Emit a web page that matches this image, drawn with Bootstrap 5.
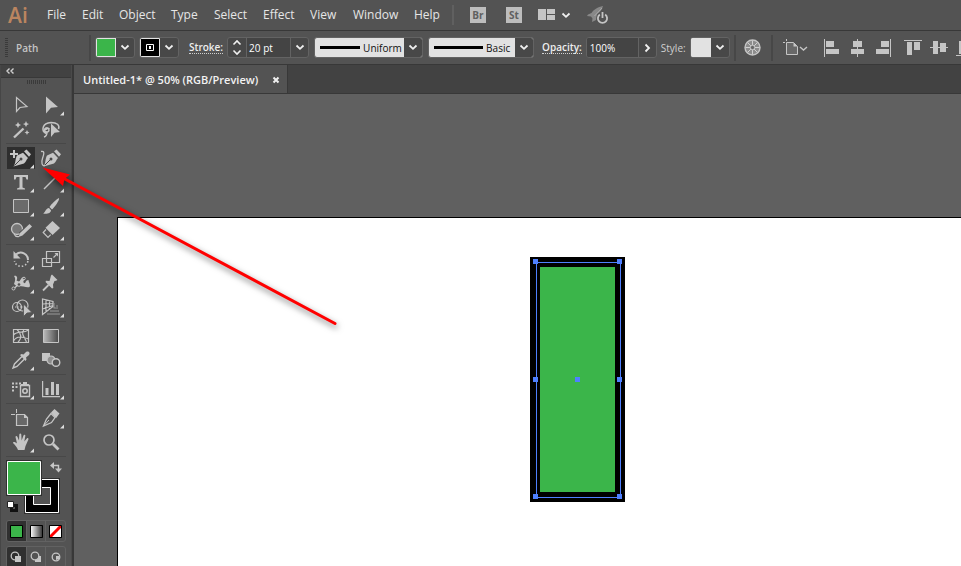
<!DOCTYPE html>
<html lang="en">
<head>
<meta charset="utf-8">
<meta name="viewport" content="width=device-width, initial-scale=1">
<title>Untitled-1</title>
<link href="https://cdn.jsdelivr.net/npm/bootstrap@5.3.0/dist/css/bootstrap.min.css" rel="stylesheet">
<style>
:root{--bar:#535353;--dark:#424242;--edge:#383838;--ink:#c5c5c5;--lite:#e2e2e2;--green:#3bb54a}
body{font-family:"Open Sans","Noto Sans",sans-serif;background:var(--bar);color:#e6e6e6;font-size:12px;line-height:16px}
button,input,select{font:inherit;color:inherit;padding:0;border:0;border-radius:0;background:none}
svg{display:block;flex:none}
.menubar{height:31px;border-bottom:1px solid var(--edge)}
.logo{font-size:21px;line-height:28px;font-weight:600;color:#bb8560;width:39px;padding-left:8px}
.menu-item{color:#e6e6e6;text-decoration:none;white-space:nowrap}
.w-file{width:35px}.w-edit{width:37px}.w-object{width:52px}.w-type{width:43px}.w-select{width:49px}.w-effect{width:47px}.w-view{width:43px}.w-window{width:61px}.w-help{width:38px}
.vsep{width:2px;height:26px;background:#474747;flex:none}
.vsep.pale{height:20px;background:#606060}
.app-tile{width:16px;height:16px;background:#bdbdbd;color:#606060;font-size:10px;font-weight:700;line-height:16px;text-align:center}
.optbar{height:34px;border-bottom:1px solid var(--edge);font-size:10px;overflow:hidden}
.optbar>*{flex:none}
.kind{width:73px;color:#c5c5c5;font-weight:600}
.grip-v{width:3px;height:19px;background:repeating-linear-gradient(#3a3a3a 0 1px,transparent 1px 2px)}
.dock-grip{height:15px;padding-top:2px}
.grip-h{width:19px;height:4px;background:repeating-linear-gradient(90deg,#3a3a3a 0 1px,transparent 1px 2px)}
.field{height:21px;border:1px solid #636363;border-radius:3px;background:#484848;overflow:hidden;position:relative}
.arrow-btn{width:18px;display:flex;align-items:center;justify-content:center;align-self:stretch}
.chip{width:20px;height:19px;border:1px solid var(--lite)}
.chip-green{background:var(--green)}
.chip-pale{background:var(--lite)}
.split{border-left:1px solid #636363}
.field input{background:#444;color:#fff;height:19px;min-width:0}
.num{width:44px;padding-left:2px}
.pct{width:51px;padding-left:3px}
.brush{background:var(--lite)}
.brush select{appearance:none;height:19px;color:#111;background:linear-gradient(90deg,var(--lite) calc(100% - 18px),#484848 0)}
.brush select:focus{outline:0}
.brush .chev{position:absolute;right:4px;top:6px;pointer-events:none}
.sel-uniform{width:62px;padding-left:3px}
.sel-basic{width:50px;padding-left:3px}
.dotted{border-bottom:1px dotted #d0d0d0;line-height:12px;font-weight:600;color:#eee}
.style-label{color:#d0d0d0}
.g4{margin-left:4px}.g5{margin-left:5px}.g8{margin-left:8px}.g10{margin-left:10px}.g12{margin-left:12px}.g16{margin-left:16px}.g20{margin-left:20px}
.dock{width:74px;border-right:2px solid var(--edge);flex:none}
.dock-in{border-right:1px solid #4a4a4a;border-left:1px solid #464646;height:100%}
.dock-head{height:13px;background:var(--dark);border-bottom:1px solid var(--edge);padding-left:5px}
.tools{width:60px;margin-left:5px}
.pair{display:grid;grid-template-columns:28px 28px;column-gap:2px;padding-left:1px;grid-auto-rows:24px}
.tool{display:block;width:28px;height:24px;color:var(--ink)}
.tool.on{background:linear-gradient(#2e2e2e,#2e2e2e) center/28px 22px no-repeat}
.rule{height:1px;background:#484848;margin:2px 0}
.f{fill:var(--ink)}
.s{fill:none;stroke:var(--ink)}
.paint{position:relative;height:60px;margin-top:3px}
.paint button{position:absolute}
.p-stroke{left:18px;top:18px}.p-fill{left:0;top:0}.p-swap{left:43px;top:1px}.p-def{left:0;top:40px}
.modes{border:1px solid #626262;border-radius:3px;height:22px;overflow:hidden}
.modes button{flex:1;display:flex;align-items:center;justify-content:center}
.modes button+button{border-left:1px solid #626262}
.modes .on{background:#303030}
.tabs{height:29px;background:var(--dark);border-bottom:1px solid var(--edge)}
.doc-tab{background:var(--bar);border-right:1px solid var(--edge);padding:1px 5px 0 9px;font-size:11px;font-weight:600;color:#f2f2f2}
.doc-tab button{margin-left:14px;width:10px}
.pasteboard{background:#606060;padding:123px 0 0 43px;min-width:0;overflow:hidden}
.artboard{background:#fff;border:solid #000;border-width:1px 0 0 1px;position:relative}
.shape{position:absolute;left:412px;top:39px}
.pointer{position:absolute;left:30px;top:150px;pointer-events:none;filter:drop-shadow(1px 3px 3px rgba(0,0,0,.55))}
</style>
<script src="https://cdn.jsdelivr.net/npm/bootstrap@5.3.0/dist/js/bootstrap.bundle.min.js"></script>
</head>
<body class="vh-100 overflow-hidden d-flex flex-column position-relative">
<svg width="0" height="0" class="position-absolute" aria-hidden="true">
  <symbol id="chev" viewBox="0 0 10 7"><path d="M1.500 1.500 5 4.800 8.500 1.500" fill="none" stroke="#f0f0f0" stroke-width="1.800"/></symbol>
  <symbol id="more" viewBox="-14 -12 28 24"><path d="M13 6.500V10.500H9z" fill="#ddd"/></symbol>
  <symbol id="nib" viewBox="-14 -12 28 24"><path d="M-7.500 8.500C-5 5-6 1-4-2.500L2-5.200 7 0C5 2 5 4 3 5.500Z" fill="#c5c5c5"/><path d="M3-6.800 5.500-8.500 10-3.800 8-1.300Z" fill="#c5c5c5"/><path d="M-6.500 7.500-.800 1.800" stroke="#484848" stroke-width="1"/><circle cx="0" cy="1" r="1.500" fill="#484848"/></symbol>
</svg>

<header>
  <nav class="menubar d-flex align-items-center" aria-label="Main menu">
    <span class="logo">Ai</span>
    <span class="d-flex ps-2">
      <a class="menu-item w-file" href="#">File</a><a class="menu-item w-edit" href="#">Edit</a><a class="menu-item w-object" href="#">Object</a><a class="menu-item w-type" href="#">Type</a><a class="menu-item w-select" href="#">Select</a><a class="menu-item w-effect" href="#">Effect</a><a class="menu-item w-view" href="#">View</a><a class="menu-item w-window" href="#">Window</a><a class="menu-item w-help" href="#">Help</a>
    </span>
    <span class="vsep pale"></span>
    <button class="app-tile ms-3">Br</button>
    <button class="app-tile g20">St</button>
    <button class="d-flex align-items-center ms-3" aria-label="Arrange documents"><svg width="18" height="12"><path class="f" d="M0 0h8v11H0zM9 0h8v5H9zM9 6h8v5H9z"/></svg><svg class="g5" width="10" height="7"><use href="#chev"/></svg></button>
    <button class="ms-3" aria-label="GPU performance"><svg width="22" height="18" viewBox="0 0 22 18"><path d="M16 0C11 1 6 4 4.500 7L1 8.500 0 10l4 .5 1.500 2L5 16l4-2 1-6c3-2 5-4 6-8Z" fill="#888"/><path d="M7.500 10 15 2" stroke="#aaa"/><circle cx="15.500" cy="12" r="6" fill="#535353"/><path d="M12.800 8.600a4.600 4.600 0 1 0 5.400 0M15.500 6v6" fill="none" stroke="#c5c5c5" stroke-width="1.800"/></svg></button>
  </nav>

  <div class="optbar d-flex align-items-center" role="toolbar" aria-label="Control">
    <span class="grip-v g5"></span>
    <span class="kind g8">Path</span>
    <span class="vsep"></span>
    <div class="field d-flex g4"><button class="chip chip-green" aria-label="Fill"></button><button class="arrow-btn" aria-label="Fill options"><svg width="10" height="7"><use href="#chev"/></svg></button></div>
    <div class="field d-flex g4"><button aria-label="Stroke colour"><svg width="20" height="19"><path fill="#000" stroke="#e2e2e2" d="M.5.5h19v18H.500z"/><path fill="none" stroke="#fff" d="M6.500 6.500h7v6h-7z"/><path fill="#fff" d="M9 8h2v3H9z"/></svg></button><button class="arrow-btn" aria-label="Stroke colour options"><svg width="10" height="7"><use href="#chev"/></svg></button></div>
    <label class="dotted g10" for="weight">Stroke:</label>
    <div class="field d-flex g4">
      <button class="arrow-btn" aria-label="Step weight"><svg width="10" height="17"><path d="M1.500 5.500 5 2l3.500 3.500M1.500 11.500 5 15l3.500-3.500" fill="none" stroke="#f0f0f0" stroke-width="1.600"/></svg></button>
      <input class="num split" id="weight" value="20 pt"><button class="arrow-btn split" aria-label="Weight presets"><svg width="10" height="7"><use href="#chev"/></svg></button>
    </div>
    <div class="field brush d-flex align-items-center g5"><svg class="g5" width="40" height="3"><path d="M0 0h40v3H0z"/></svg><select class="sel-uniform" aria-label="Width profile"><option>Uniform</option></select><svg class="chev" width="10" height="7"><use href="#chev"/></svg></div>
    <div class="field brush d-flex align-items-center g5"><svg class="g5" width="49" height="3"><path d="M0 0h49v3H0z"/></svg><select class="sel-basic" aria-label="Brush"><option>Basic</option></select><svg class="chev" width="10" height="7"><use href="#chev"/></svg></div>
    <label class="dotted g8" for="opacity">Opacity:</label>
    <div class="field d-flex g4"><input class="pct" id="opacity" value="100%"><button class="arrow-btn split" aria-label="Opacity slider"><svg width="7" height="10"><path d="M1.500 1.500 5 5 1.500 8.500" fill="none" stroke="#f0f0f0" stroke-width="1.800"/></svg></button></div>
    <span class="g4 style-label">Style:</span>
    <div class="field d-flex g4"><button class="chip chip-pale" aria-label="Graphic style"></button><button class="arrow-btn" aria-label="Style options"><svg width="10" height="7"><use href="#chev"/></svg></button></div>
    <span class="vsep g4"></span>
    <button class="g8" aria-label="Recolor artwork"><svg width="17" height="17" viewBox="-8.500 -8.500 17 17"><circle r="7.500" fill="#8d8d8d" stroke="#c5c5c5" stroke-width="1.400"/><path d="M0-7V7M-7 0H7M-5-5 5 5M5-5-5 5" stroke="#d0d0d0" stroke-width="1"/><circle r="2.200" fill="#666" stroke="#c5c5c5"/></svg></button>
    <span class="vsep g10"></span>
    <button class="g10" aria-label="Transform"><svg width="25" height="17" viewBox="0 0 25 17"><path d="M3.500 3.500h7l4 4v8h-11z" fill="#686868" stroke="#c5c5c5"/><path d="M10.500 3.500v4h4z" fill="#c5c5c5"/><path class="s" d="M0 3.500h2M3.500 0v2"/><path class="s" d="m17 8 3.500 3L24 8" stroke-width="1.400"/></svg></button>
    <button class="g16" aria-label="Align left"><svg width="15" height="18"><path class="f" d="M0 0h1v18H0zM2 2h8v6H2zM2 10h13v5H2z"/></svg></button>
    <button class="g12" aria-label="Align horizontal centre"><svg width="13" height="18"><path class="f" d="M6 0h1v18H6zM2 2h9v6H2zM0 10h13v5H0z"/></svg></button>
    <button class="g12" aria-label="Align right"><svg width="16" height="18"><path class="f" d="M14 0h1v18h-1zM5 2h8v6H5zM0 10h13v5H0z"/></svg></button>
    <button class="g12" aria-label="Align top"><svg width="18" height="18"><path class="f" d="M0 1h18v1H0zM3 3h5v13H3zM10 3h6v8h-6z"/></svg></button>
    <button class="g8" aria-label="Align vertical centre"><svg width="18" height="18"><path class="f" d="M0 8h18v1H0zM3 2h5v13H3zM10 4h6v9h-6z"/></svg></button>
    <button class="g8" aria-label="Align bottom"><svg width="18" height="18"><path class="f" d="M0 16h18v1H0zM3 2h5v13H3z"/></svg></button>
  </div>
</header>

<main class="d-flex flex-grow-1 overflow-hidden">
  <aside class="dock"><div class="dock-in">
    <div class="dock-head d-flex align-items-center"><button aria-label="Collapse panel"><svg width="8" height="6"><path d="M3.500.500 1 3l2.500 2.500M7.500.500 5 3l2.500 2.500" fill="none" stroke="#d0d0d0" stroke-width="1.400"/></svg></button></div>
    <div class="d-flex justify-content-center dock-grip"><span class="grip-h"></span></div>
    <div class="tools">
      <div class="pair">
        <button class="tool" aria-label="Selection"><svg viewBox="-14 -12 28 24"><path class="s" stroke-width="1.200" d="M-4.500-7.500V6.500L-1 2.500 6 1.500Z"/></svg></button>
        <button class="tool" aria-label="Direct selection"><svg viewBox="-14 -12 28 24"><path class="f" d="M-5-8.500V8.500L0 2.800 7 2Z"/><use href="#more" x="-14" y="-12" width="28" height="24"/></svg></button>
        <button class="tool" aria-label="Magic wand"><svg viewBox="-14 -12 28 24"><path class="s" stroke-width="2.400" d="M-7 8.500 2.500-.500"/><path class="f" d="m-3-7 1 2 2 1-2 1-1 2-1-2-2-1 2-1zM5-8l1 2.300L8-5 6-4 5-2 4-4 2-5l2-.7zM6 1l.8 1.700L8.500 3.500 6.800 4.300 6 6l-.8-1.700L3.500 3.500l1.700-.8z"/></svg></button>
        <button class="tool" aria-label="Lasso"><svg viewBox="-14 -12 28 24"><path class="s" stroke-width="1.500" d="M-5 4.500C-10 2-9-6 0-6.500 6-6.500 9-4 7.500 0M-1.500 0c-3-3-6 0-4.500 2s4 1 4-1-3-2-3 0M-4 3c0 3-1 4.500-3 5"/><path class="f" d="M0-5.500V8l3.500-4.200L9 3Z"/></svg></button>
      </div>
      <div class="rule"></div>
      <div class="pair">
        <button class="tool on" aria-label="Add anchor point"><svg viewBox="-14 -12 28 24"><use href="#nib" x="-14" y="-12" width="28" height="24"/><path stroke="#2e2e2e" stroke-width="4" d="M-7-7v7"/><path class="s" stroke-width="2" d="M-11-4h8M-7-8v8"/><use href="#more" x="-14" y="-12" width="28" height="24"/></svg></button>
        <button class="tool" aria-label="Curvature"><svg viewBox="-14 -12 28 24"><use href="#nib" x="-14" y="-12" width="28" height="24"/><path class="s" stroke-width="1.300" d="M-10-6.500c4-1 3 3 1.500 7S-9 8.500-6 7.500"/></svg></button>
        <button class="tool" aria-label="Type"><svg viewBox="-14 -12 28 24"><path class="f" d="M-7-7H7v4.500H5.500L4.500-5H1.500V5.500L4 6.500v1H-4v-1l2.500-1V-5H-4.500l-1 2.500H-7z"/><use href="#more" x="-14" y="-12" width="28" height="24"/></svg></button>
        <button class="tool" aria-label="Line segment"><svg viewBox="-14 -12 28 24"><path class="s" stroke-width="1.400" d="M-7 7 6-6"/><use href="#more" x="-14" y="-12" width="28" height="24"/></svg></button>
        <button class="tool" aria-label="Rectangle"><svg viewBox="-14 -12 28 24"><path d="M-7.500-6.500h15v13h-15z" fill="#6b6b6b" stroke="#c5c5c5"/><use href="#more" x="-14" y="-12" width="28" height="24"/></svg></button>
        <button class="tool" aria-label="Paintbrush"><svg viewBox="-14 -12 28 24"><path class="f" d="M8-8C9-6 3 2 1 3.500L-1.500 1C0-1.500 6-7.500 8-8ZM-2 2 0 4.200C0 7-4 8.500-8 7.500-6 7-5.500 2.500-2 2Z"/><use href="#more" x="-14" y="-12" width="28" height="24"/></svg></button>
        <button class="tool" aria-label="Shaper"><svg viewBox="-14 -12 28 24"><circle cx="-4" cy="-1" r="5.500" fill="#777" stroke="#c5c5c5" stroke-width="1.300"/><path d="M9-4.500-.500 4.500" stroke="#535353" stroke-width="5"/><path class="f" d="M8.500-6 11-3.500 1.500 5.500-2.500 7-1 3Z"/><path class="s" d="M-7 4C-6 6-4 7-2 6.500" stroke-width="1.200"/><use href="#more" x="-14" y="-12" width="28" height="24"/></svg></button>
        <button class="tool" aria-label="Eraser"><svg viewBox="-14 -12 28 24"><path class="f" d="M1.500-9 9-2 1.500 5-5.500-2.200Z"/><path class="s" stroke-width="1.200" d="m-5-.500-2.800 3L-3 7.500-.300 4.700"/><use href="#more" x="-14" y="-12" width="28" height="24"/></svg></button>
      </div>
      <div class="rule"></div>
      <div class="pair">
        <button class="tool" aria-label="Rotate"><svg viewBox="-14 -12 28 24"><path class="s" stroke-width="2" d="M-5-4.500C0-9 7-5 7 1"/><path class="s" stroke-width="1.600" stroke-dasharray="1.500 2" d="M7 2C5 9-5 9-6.500 2"/><path class="f" d="M-7.500-8v7.500h7z"/><use href="#more" x="-14" y="-12" width="28" height="24"/></svg></button>
        <button class="tool" aria-label="Scale"><svg viewBox="-14 -12 28 24"><path class="s" stroke-width="1.200" d="M-4.500-7.500h13v11h-13zM-8.500-.500h9v8h-9zM2.500-1.500l4-4"/><path class="f" d="M3.500-6H7v3.500z"/><use href="#more" x="-14" y="-12" width="28" height="24"/></svg></button>
        <button class="tool" aria-label="Width"><svg viewBox="-14 -12 28 24"><path class="f" d="M-7-7c3-1 4 2 2.500 4.500L-2-1.500C0-3 0-6 3-6c2 1-2 4 0 6C5 1 4-3 7.500-3 7.500-1 10 2 8.500 4 5 5-1 2-4 3.500L-7 1c1-3 2-5 0-8Z"/><path class="s" stroke-width="1.300" d="M-7 5.500-1 0 3-4"/><circle cx="-7.500" cy="5.500" r="1.500" fill="#535353" stroke="#c5c5c5"/><circle cx="-2" cy="1.500" r="1.800" fill="#535353" stroke="#c5c5c5"/><circle cx="3" cy="-4.500" r="1.300" fill="#535353" stroke="#c5c5c5"/><use href="#more" x="-14" y="-12" width="28" height="24"/></svg></button>
        <button class="tool" aria-label="Puppet warp"><svg viewBox="-14 -12 28 24"><path class="f" d="M1-8.500 6.500-3 5-2.200 3.500-2 2 1.500 2.300 5 1 5.500-5.500-1 -5-2.300-1.500-2-.500-5.500 0-7.500Z"/><path class="s" stroke-width="1.800" d="M-2.500 2-8 7.500"/><use href="#more" x="-14" y="-12" width="28" height="24"/></svg></button>
        <button class="tool" aria-label="Shape builder"><svg viewBox="-14 -12 28 24"><circle class="s" cx="-4" cy="0" r="4.500" stroke-width="1.200"/><circle class="s" cx="1.500" cy="-1.500" r="5.500" stroke-width="1.200"/><path d="M-6 0H5" class="s" stroke-width="1.200" stroke-dasharray="1.200 1.300"/><path d="M2.500-3V9.500L6 6 11 5.500Z" fill="#c5c5c5" stroke="#535353" stroke-width=".8"/><use href="#more" x="-14" y="-12" width="28" height="24"/></svg></button>
        <button class="tool" aria-label="Perspective grid"><svg viewBox="-14 -12 28 24"><path class="s" stroke-width="1.200" d="M-8.500-8V7.500L2-.500V-5.500ZM-5-7.500V5M-1.500-6.500V2M-8.500-3l10.500-.500M-8.500 2 2-1.500"/><path d="M3-4V1M5-1h2M2.500 1H7M-1 4H8M-4 7H9" stroke="#999" fill="none"/><use href="#more" x="-14" y="-12" width="28" height="24"/></svg></button>
      </div>
      <div class="rule"></div>
      <div class="pair">
        <button class="tool" aria-label="Mesh"><svg viewBox="-14 -12 28 24"><path class="s" stroke-width="1.200" d="M-7.500-6.500h15v13h-15zM-7.500-1C-3-6 2-2 7.500-6M-7.500 5C-4-1 2 1 7.500 3M-4-6.500C1-2 1 2-3 6.500M3-6.500C-1-1 5 2 5.500 6.500"/></svg></button>
        <button class="tool" aria-label="Gradient"><svg viewBox="-14 -12 28 24"><defs><linearGradient id="gg"><stop stop-color="#bbb"/><stop offset="1" stop-color="#484848"/></linearGradient></defs><path d="M-7.500-6.500h15v13h-15z" fill="url(#gg)" stroke="#c5c5c5"/></svg></button>
        <button class="tool" aria-label="Eyedropper"><svg viewBox="-14 -12 28 24"><path class="s" stroke-width="1.400" d="M1-3.500-6.500 4-8 8l4-1.500L3.500-1"/><path class="f" d="m-1-5 1.500-1 2 .500L5-8C8-9.500 9.500-7 8-5L5-2.500 5.500-.500 4.500 1Z"/><use href="#more" x="-14" y="-12" width="28" height="24"/></svg></button>
        <button class="tool" aria-label="Blend"><svg viewBox="-14 -12 28 24"><path class="f" d="M-9-7h8v8h-8z"/><circle cx="0" cy="0" r="4" fill="#8e8e8e" stroke="#c5c5c5" stroke-width="1.200"/><circle cx="5" cy="2.500" r="3.800" fill="#535353" stroke="#c5c5c5" stroke-width="1.400"/></svg></button>
      </div>
      <div class="rule"></div>
      <div class="pair">
        <button class="tool" aria-label="Symbol sprayer"><svg viewBox="-14 -12 28 24"><path class="s" stroke-width="1.400" d="M-.500-3.500h9v11h-9z"/><circle class="s" cx="4" cy="2" r="2.200" stroke-width="1.600"/><path class="f" d="M2-7h4v2h2v1.500H0V-5h2zM-9-6.500h2v2h-2zM-5.500-6.500h2v2h-2zM-2-6.500H0v2h-2zM-9-3h2v2h-2zM-5.500-3h2v2h-2zM-9 .500h2v2h-2z"/><use href="#more" x="-14" y="-12" width="28" height="24"/></svg></button>
        <button class="tool" aria-label="Column graph"><svg viewBox="-14 -12 28 24"><path class="f" d="M-9-8h1.200V7H9v1.200H-9zM-5.500-1h3v7h-3zM0-7h3V6H0zM5-5h3V6H5z"/><use href="#more" x="-14" y="-12" width="28" height="24"/></svg></button>
      </div>
      <div class="rule"></div>
      <div class="pair">
        <button class="tool" aria-label="Artboard"><svg viewBox="-14 -12 28 24"><path d="M-4.500-3.500h8l3 3v8h-11z" fill="#686868" stroke="#c5c5c5" stroke-width="1.200"/><path class="f" d="M3-4v4h4z"/><path class="s" d="M-10-3.500h4M-4.500-9v4"/></svg></button>
        <button class="tool" aria-label="Slice"><svg viewBox="-14 -12 28 24"><path class="s" stroke-width="1.300" d="M0-4.500-4.500 1-7.500 8 .500 4.500 4-.500Z"/><path class="f" d="M0-5.500 3.500-9 8.500-4.500 5 .200Z"/><path class="s" d="M-7 7.500-2 2"/><use href="#more" x="-14" y="-12" width="28" height="24"/></svg></button>
        <button class="tool" aria-label="Hand"><svg viewBox="-14 -12 28 24"><path class="f" d="M-3 8C-4 5-6 3-8 1c0-1.500 2-1.500 4 .500L-5.500-5c0-1.500 1.500-1.500 2 0L-2-1.500-1.700-7.500c.3-1.500 1.700-1.500 2 0L.600-1.500 2.500-6.500c.7-1.400 2-.8 1.800.500L3.300-.500 5.800-3.500c1-1 2.200 0 1.500 1.200L4.500 4 3.500 8Z"/><use href="#more" x="-14" y="-12" width="28" height="24"/></svg></button>
        <button class="tool" aria-label="Zoom"><svg viewBox="-14 -12 28 24"><circle class="s" cx="-2" cy="-2" r="5" stroke-width="1.700"/><path class="s" stroke-width="2.800" d="M2 2 7.500 7.500"/></svg></button>
      </div>
      <div class="rule"></div>
      <div class="paint">
        <button class="p-stroke" aria-label="Stroke"><svg width="36" height="36"><path fill="#303030" d="M0 0h36v36H0z"/><path fill="#000" stroke="#fff" d="M1.500 1.500h33v33h-33z"/><path fill="#535353" stroke="#fff" d="M9.500 9.500h17v17h-17z"/></svg></button>
        <button class="p-fill" aria-label="Fill colour"><svg width="36" height="36"><path fill="#303030" d="M0 0h36v36H0z"/><path fill="#3bb54a" stroke="#fff" d="M1.500 1.500h33v33h-33z"/></svg></button>
        <button class="p-swap" aria-label="Swap fill and stroke"><svg width="13" height="12"><path class="s" stroke-width="1.400" d="M3 4.500h6.500V9"/><path class="f" d="M5 1v7L1 4.500zM6 7.500h7l-3.500 4z"/></svg></button>
        <button class="p-def" aria-label="Default colours"><svg width="12" height="13"><path d="M5.500 5.500h5v5h-5z" fill="none" stroke="#111" stroke-width="3"/><path fill="#fff" stroke="#222" d="M1.500 1.500h6v6h-6z"/></svg></button>
      </div>
      <div class="modes d-flex">
        <button class="on" aria-label="Color"><svg width="13" height="13"><path fill="#3bb54a" stroke="#000" d="M.5.5h12v12H.500z"/></svg></button>
        <button aria-label="Gradient fill"><svg width="13" height="13"><defs><linearGradient id="gm"><stop stop-color="#fff"/><stop offset="1" stop-color="#333"/></linearGradient></defs><path fill="url(#gm)" stroke="#000" d="M.5.5h12v12H.500z"/></svg></button>
        <button aria-label="None"><svg width="13" height="13"><path fill="#fff" d="M1 1h11v11H1z"/><path stroke="#f00" stroke-width="3" d="M1 12 12 1"/><path fill="none" stroke="#000" d="M.5.5h12v12H.500z"/></svg></button>
      </div>
      <div class="modes d-flex mt-1">
        <button class="on" aria-label="Draw normal"><svg width="12" height="12"><circle class="s" cx="5" cy="5" r="3.800" stroke-width="1.300"/><path class="f" d="M5 5h6v6H5z"/></svg></button>
        <button aria-label="Draw behind"><svg width="12" height="12"><path class="f" d="M5 5h6v6H5z"/><circle cx="5" cy="5" r="3.800" fill="#535353" stroke="#c5c5c5" stroke-width="1.300"/></svg></button>
        <button aria-label="Draw inside"><svg width="12" height="12"><circle class="s" cx="6" cy="6" r="3.800" stroke-width="1.300"/><path class="f" d="M6 5h3v3l-3 1z"/></svg></button>
      </div>
    </div>
  </div></aside>

  <section class="d-flex flex-column flex-grow-1 overflow-hidden">
    <div class="tabs d-flex">
      <div class="doc-tab d-flex align-items-center"><span>Untitled-1* @ 50% (RGB/Preview)</span><button aria-label="Close"><svg width="8" height="8"><path d="m1.500 1.500 5 5M6.500 1.500l-5 5" stroke="#f0f0f0" stroke-width="2"/></svg></button></div>
    </div>
    <div class="pasteboard flex-grow-1 d-flex">
      <div class="artboard flex-grow-1">
        <svg class="shape" width="95" height="245" role="img" aria-label="Selected rectangle"><path d="M0 0h95v245H0z"/><path fill="#3bb54a" d="M10 10h75v225H10z"/><g fill="none" stroke="#4f80ff"><path d="M6.500 5.500h84v235h-84z"/></g><path fill="#4f80ff" d="M3 2h5v5H3zM87 2h5v5h-5zM3 120h5v5H3zM87 120h5v5h-5zM3 237h5v5H3zM87 237h5v5h-5zM45 120h5v5h-5z"/></svg>
      </div>
    </div>
  </section>
</main>
<svg class="pointer" width="320" height="190" role="img" aria-label="Arrow to the pen tools"><path d="M33 28 305 173.500" stroke="#f00" stroke-width="3" stroke-linecap="round"/><path fill="#f00" d="M12.500 17.500 40 24.500 34.500 29 33 36Z"/></svg>
</body>
</html>
